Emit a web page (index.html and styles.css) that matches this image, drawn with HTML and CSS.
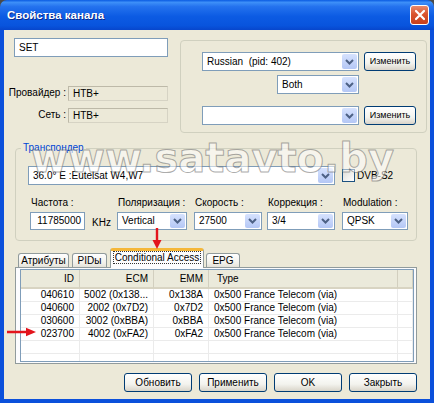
FILE: index.html
```html
<!DOCTYPE html>
<html lang="ru">
<head>
    <meta charset="UTF-8">
    <title>Свойства канала</title>
    <link rel="stylesheet" href="styles.css">
</head>
<body>
<div class="window">
    <div class="titlebar">
        <span class="title">Свойства канала</span>
        <span class="close-btn">
            <svg width="12" height="12" viewBox="0 0 12 12"><path d="M2 2 L10 10 M10 2 L2 10" stroke="#fff" stroke-width="2.2" stroke-linecap="round"/></svg>
        </span>
    </div>

    <div class="frame">
        <!-- name / provider / audio -->
        <div class="top">
            <div class="info">
                <div class="edit name">SET</div>
                <div class="info-row prov">
                    <span class="info-label">Провайдер :</span>
                    <span class="readonly">НТВ+</span>
                </div>
                <div class="info-row net">
                    <span class="info-label">Сеть :</span>
                    <span class="readonly">НТВ+</span>
                </div>
            </div>

            <div class="audio-group">
                <div class="audio-row">
                    <div class="combo w157"><span class="combo-text">Russian&nbsp; (pid: 402)</span><span class="arrow"><svg width="9" height="6" viewBox="0 0 9 6"><path d="M1 1 L4.5 4.5 L8 1" fill="none" stroke="#4d6185" stroke-width="2"/></svg></span></div>
                    <span class="btn small">Изменить</span>
                </div>
                <div class="audio-row both">
                    <div class="combo w82"><span class="combo-text">Both</span><span class="arrow"><svg width="9" height="6" viewBox="0 0 9 6"><path d="M1 1 L4.5 4.5 L8 1" fill="none" stroke="#4d6185" stroke-width="2"/></svg></span></div>
                </div>
                <div class="audio-row third">
                    <div class="combo w157"><span class="combo-text"></span><span class="arrow"><svg width="9" height="6" viewBox="0 0 9 6"><path d="M1 1 L4.5 4.5 L8 1" fill="none" stroke="#4d6185" stroke-width="2"/></svg></span></div>
                    <span class="btn small">Изменить</span>
                </div>
            </div>
        </div>

        <!-- transponder -->
        <fieldset class="transponder">
            <legend>Транспондер</legend>
            <div class="sat-row">
                <div class="combo sat"><span class="combo-text">36.0° E :Eutelsat W4,W7</span><span class="arrow"><svg width="9" height="6" viewBox="0 0 9 6"><path d="M1 1 L4.5 4.5 L8 1" fill="none" stroke="#4d6185" stroke-width="2"/></svg></span></div>
                <span class="checkbox"></span>
                <span class="check-label">DVB-S2</span>
            </div>
            <div class="params">
                <div class="param">
                    <span class="param-label">Частота :</span>
                    <div class="param-ctrl">
                        <div class="edit freq">11785000</div>
                        <span class="unit">KHz</span>
                    </div>
                </div>
                <div class="param">
                    <span class="param-label">Поляризация :</span>
                    <div class="combo w70"><span class="combo-text">Vertical</span><span class="arrow"><svg width="9" height="6" viewBox="0 0 9 6"><path d="M1 1 L4.5 4.5 L8 1" fill="none" stroke="#4d6185" stroke-width="2"/></svg></span></div>
                </div>
                <div class="param">
                    <span class="param-label">Скорость :</span>
                    <div class="combo w68"><span class="combo-text">27500</span><span class="arrow"><svg width="9" height="6" viewBox="0 0 9 6"><path d="M1 1 L4.5 4.5 L8 1" fill="none" stroke="#4d6185" stroke-width="2"/></svg></span></div>
                </div>
                <div class="param">
                    <span class="param-label">Коррекция :</span>
                    <div class="combo w68"><span class="combo-text">3/4</span><span class="arrow"><svg width="9" height="6" viewBox="0 0 9 6"><path d="M1 1 L4.5 4.5 L8 1" fill="none" stroke="#4d6185" stroke-width="2"/></svg></span></div>
                </div>
                <div class="param">
                    <span class="param-label">Modulation :</span>
                    <div class="combo w66"><span class="combo-text">QPSK</span><span class="arrow"><svg width="9" height="6" viewBox="0 0 9 6"><path d="M1 1 L4.5 4.5 L8 1" fill="none" stroke="#4d6185" stroke-width="2"/></svg></span></div>
                </div>
            </div>
        </fieldset>

        <!-- tabs -->
        <div class="tabs">
            <span class="tab t-attr">Атрибуты</span>
            <span class="tab t-pid">PIDы</span>
            <span class="tab active"><span class="focus">Conditional Access</span></span>
            <span class="tab t-epg">EPG</span>
        </div>
        <div class="tab-panel">
            <div class="listview">
                <table>
                    <colgroup>
                        <col class="c-id"><col class="c-ecm"><col class="c-emm"><col class="c-type"><col>
                    </colgroup>
                    <thead>
                        <tr><th class="num">ID</th><th class="num">ECM</th><th class="num">EMM</th><th class="txt">Type</th><th></th></tr>
                    </thead>
                    <tbody>
                        <tr><td class="num">040610</td><td class="num">5002 (0x138...</td><td class="num">0x138A</td><td class="txt">0x500 France Telecom (via)</td><td></td></tr>
                        <tr><td class="num">040600</td><td class="num">2002 (0x7D2)</td><td class="num">0x7D2</td><td class="txt">0x500 France Telecom (via)</td><td></td></tr>
                        <tr><td class="num">030600</td><td class="num">3002 (0xBBA)</td><td class="num">0xBBA</td><td class="txt">0x500 France Telecom (via)</td><td></td></tr>
                        <tr><td class="num">023700</td><td class="num">4002 (0xFA2)</td><td class="num">0xFA2</td><td class="txt">0x500 France Telecom (via)</td><td></td></tr>
                        <tr><td></td><td></td><td></td><td></td><td></td></tr>
                        <tr><td></td><td></td><td></td><td></td><td></td></tr>
                    </tbody>
                </table>
            </div>
        </div>

        <!-- dialog buttons -->
        <div class="buttons">
            <span class="btn">Обновить</span>
            <span class="btn">Применить</span>
            <span class="btn">OK</span>
            <span class="btn">Закрыть</span>
        </div>
    </div>

    <!-- overlays -->
    <div class="watermark">www.satavto.by</div>
    <svg class="mark-down" width="12" height="22" viewBox="0 0 12 22"><path d="M6 0 V14" stroke="#e3141c" stroke-width="2.4"/><path d="M1.5 12 L6 21 L10.5 12 Z" fill="#e3141c"/></svg>
    <svg class="mark-right" width="30" height="10" viewBox="0 0 30 10"><path d="M0 5 H21" stroke="#e3141c" stroke-width="2.4"/><path d="M19 0.8 L29 5 L19 9.2 Z" fill="#e3141c"/></svg>
</div>
</body>
</html>
```

FILE: styles.css
```css
/* General */
html {
    background: #4a4a4a;
}

body {
    margin: 0;
    font-family: 'Liberation Sans', Arial, sans-serif;
    font-size: 10px;
    color: #000;
}

.window {
    position: relative;
    width: 434px;
    height: 403px;
    display: flex;
    flex-direction: column;
    border-radius: 7px 7px 0 0;
    overflow: hidden;
}

/* Title bar */
.titlebar {
    height: 30px;
    flex: none;
    display: flex;
    align-items: center;
    justify-content: space-between;
    padding: 0 5px 0 7px;
    background: linear-gradient(to bottom, #0a5be2 0%, #3d8ff8 8%, #2472ee 22%, #0c5be3 55%, #0854dd 85%, #0746cc 100%);
}

.title {
    color: #fff;
    font-weight: bold;
    font-size: 11.5px;
    text-shadow: 1px 1px #0b2a8a;
}

.close-btn {
    width: 19px;
    height: 20px;
    box-sizing: border-box;
    border: 1px solid #fff;
    border-radius: 3px;
    background: linear-gradient(to bottom, #e98a6c, #d9542e 45%, #c9401c);
    display: flex;
    align-items: center;
    justify-content: center;
}

.frame {
    flex: 1;
    background: #ece9d8;
    border: 4px solid #0b50db;
    border-top: none;
    display: flex;
    flex-direction: column;
}

/* Common controls */
.edit {
    box-sizing: border-box;
    background: #fff;
    border: 1px solid #7f9db9;
    padding-left: 4px;
}

.combo {
    box-sizing: border-box;
    height: 19px;
    display: flex;
    background: #fff;
    border: 1px solid #7f9db9;
}

.combo-text {
    flex: 1;
    padding-left: 4px;
    line-height: 17px;
    white-space: nowrap;
    overflow: hidden;
}

.arrow {
    width: 15px;
    margin: 1px;
    display: flex;
    align-items: center;
    justify-content: center;
    background: linear-gradient(to bottom, #d6e2fe, #b4c7f5);
    border-radius: 2px;
}

.w157 { width: 157px; }
.w82 { width: 82px; }
.w70 { width: 70px; }
.w68 { width: 68px; }
.w66 { width: 66px; }

.btn {
    box-sizing: border-box;
    width: 68px;
    height: 19px;
    line-height: 17px;
    text-align: center;
    border: 1px solid #003c74;
    border-radius: 3px;
    background: linear-gradient(to bottom, #ffffff, #f3f3ee 60%, #d9d4c9);
}

.btn.small {
    width: 52px;
    font-size: 9px;
}

/* Top section */
.top {
    display: flex;
    height: 103px;
}

.info {
    width: 164px;
}

.name {
    margin: 8px 0 0 10px;
    width: 154px;
    height: 19px;
    line-height: 17px;
}

.info-row {
    display: flex;
    height: 15px;
    line-height: 14px;
}

.prov { margin-top: 29px; }
.net { margin-top: 7px; }

.info-label {
    width: 64px;
    padding-right: 2px;
    box-sizing: border-box;
    text-align: right;
}

.readonly {
    width: 100px;
    box-sizing: border-box;
    padding-left: 4px;
    border: 1px solid #d6d3c4;
    border-top-color: #bdb9a8;
    border-left-color: #bdb9a8;
}

.audio-group {
    margin: 10px 0 0 12px;
    width: 247px;
    height: 93px;
    box-sizing: border-box;
    border: 1px solid #d0d0bf;
    border-radius: 4px;
    padding: 11px 0 0 21px;
}

.audio-row {
    display: flex;
    gap: 5px;
}

.audio-row.both {
    margin: 4px 0 0 75px;
}

.audio-row.third {
    margin-top: 12px;
}

/* Transponder group */
.transponder {
    margin: 9px 0 0 11px;
    width: 402px;
    box-sizing: border-box;
    border: 1px solid #d0d0bf;
    border-radius: 4px;
    padding: 12px 0 10px 12px;
}

.transponder legend {
    color: #0046d5;
    padding: 0 2px;
    margin-left: -7px;
    line-height: 12px;
}

.sat-row {
    display: flex;
    align-items: center;
}

.combo.sat {
    width: 307px;
}

.checkbox {
    width: 13px;
    height: 13px;
    box-sizing: border-box;
    margin-left: 7px;
    border: 1px solid #1c5180;
    background: linear-gradient(135deg, #dcdcd7, #fff);
}

.check-label {
    margin-left: 2px;
}

.params {
    display: grid;
    grid-template-columns: 87px 77px 73px 75px 66px;
    margin: 12px 0 0 2px;
}

.param-label {
    display: block;
    line-height: 12px;
    margin-bottom: 3px;
    padding-left: 1px;
    white-space: nowrap;
}

.param-ctrl {
    display: flex;
    align-items: flex-end;
}

.freq {
    width: 55px;
    height: 18px;
    line-height: 16px;
    text-align: right;
    padding-right: 3px;
}

.unit {
    margin-left: 7px;
    line-height: 14px;
}

.params .combo {
    height: 18px;
}

.params .combo-text {
    line-height: 16px;
}

/* Tabs */
.tabs {
    display: flex;
    align-items: flex-end;
    height: 19px;
    margin-top: 7px;
    padding-left: 14px;
    position: relative;
    z-index: 1;
}

.tab {
    box-sizing: border-box;
    height: 14px;
    line-height: 13px;
    text-align: center;
    border: 1px solid #919b9c;
    border-bottom: none;
    border-radius: 3px 3px 0 0;
    background: linear-gradient(to bottom, #fff, #f1f0ea 70%, #e4e2d8);
}

.t-attr { width: 51px; }
.t-pid { width: 35px; margin-left: 3px; }
.t-epg { width: 34px; margin-left: 2px; }

.tab.active {
    width: 94px;
    height: 20px;
    margin: 0 0 -1px 3px;
    border-top: 3px solid #f5b738;
    background: #fcfcfe;
    line-height: 14px;
}

.focus {
    outline: 1px dotted #333;
    outline-offset: 0;
    padding: 0 1px;
}

.tab-panel {
    margin-left: 11px;
    width: 402px;
    height: 97px;
    box-sizing: border-box;
    border: 1px solid #919b9c;
    background: #fcfcfe;
    padding: 1px 2px 0 4px;
}

/* List view */
.listview {
    height: 93px;
    box-sizing: border-box;
    border: 1px solid #7f9db9;
    background: #fff;
    overflow: hidden;
}

.listview table {
    width: 100%;
    table-layout: fixed;
    border-collapse: separate;
    border-spacing: 0;
}

.c-id { width: 59px; }
.c-ecm { width: 74px; }
.c-emm { width: 55px; }
.c-type { width: 189px; }

.listview th {
    height: 19px;
    box-sizing: border-box;
    padding: 0;
    font-weight: normal;
    background: #ebeadb;
    border-bottom: 2px solid #d8d4c2;
    border-right: 1px solid #d2cfbf;
}

.listview td {
    height: 13px;
    box-sizing: border-box;
    padding: 0;
    line-height: 12px;
    white-space: nowrap;
    overflow: hidden;
    border-right: 1px solid #ebebeb;
    border-bottom: 1px solid #ebebeb;
}

.listview .num {
    text-align: right;
    padding-right: 5px;
}

.listview td.txt {
    text-align: left;
    padding-left: 5px;
}

.listview th.txt {
    text-align: left;
    padding-left: 8px;
}

/* Dialog buttons */
.buttons {
    display: flex;
    justify-content: flex-end;
    gap: 7px;
    margin-top: 9px;
    padding-right: 13px;
}

/* Overlays */
.watermark {
    position: absolute;
    left: 31px;
    top: 138px;
    font-family: 'DejaVu Sans', sans-serif;
    font-weight: bold;
    font-size: 40px;
    line-height: 40px;
    color: rgba(255, 255, 255, 0.55);
    -webkit-text-stroke: 1px rgba(90, 90, 90, 0.5);
    pointer-events: none;
    z-index: 5;
}

.mark-down {
    position: absolute;
    left: 151px;
    top: 228px;
    z-index: 6;
}

.mark-right {
    position: absolute;
    left: 7px;
    top: 327px;
    z-index: 6;
}
```
